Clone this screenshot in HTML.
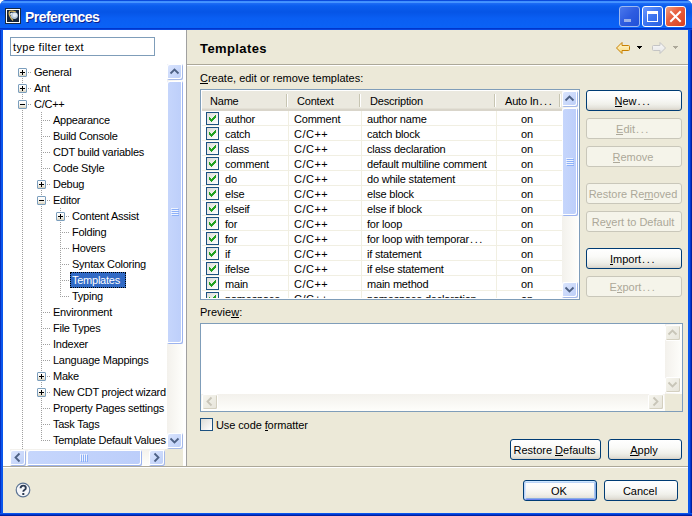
<!DOCTYPE html><html><head><meta charset="utf-8"><style>
*{box-sizing:border-box}
html,body{margin:0;padding:0;width:692px;height:516px;overflow:hidden;background:#fff}
body{position:relative;font-family:"Liberation Sans",sans-serif;font-size:11px;color:#000}
div{position:absolute}
.t{white-space:nowrap;line-height:13px;font-size:11px}
u{text-decoration:none;border-bottom:1px solid currentColor;line-height:9px;display:inline-block}
.btn{border:1px solid #003C74;border-radius:3px;background:linear-gradient(#FFFFFF 0%,#FAFAF8 40%,#F0F0EA 70%,#E3E1D9 90%,#D6D0C5 100%);text-align:center;line-height:19px;font-size:11px;padding-top:1px;padding-right:2px}
.btn.dis{border-color:#C9C7BA;background:#F5F4EA;color:#ACA899}
.sbtn{border-radius:2px;background:linear-gradient(90deg,#C8D6FB,#BACCF8);border:1px solid #fff;box-shadow:inset -1px -1px 0 #A8BDEC}
</style></head><body>
<div style="left:0;top:0;width:692px;height:516px;background:#0A47D9;border-radius:6px 6px 0 0"></div>
<div style="left:0;top:0;width:692px;height:30px;border-radius:6px 6px 0 0;background:linear-gradient(#0A4ADC 0px,#0A4ADC 1px,#3D8FFF 1px,#4A95FF 3px,#1E6DF6 3px,#0A5DEE 6px,#0655E6 12px,#0A5EF2 18px,#0A62F6 27px,#0A62F6 28px,#0036CC 28px,#0036CC 29px,#0A48E0 29px,#0A48E0 30px)"></div>
<div style="position:absolute;left:0px;top:30px;width:3px;height:486px;background:linear-gradient(90deg,#0630C4 0,#0630C4 1px,#0A56EC 1px,#0A56EC 3px)"></div>
<div style="position:absolute;left:688px;top:30px;width:4px;height:486px;background:linear-gradient(90deg,#0A56EC 0,#0A56EC 2px,#0038D0 2px,#0038D0 3px,#0020A0 3px)"></div>
<div style="position:absolute;left:0px;top:513px;width:692px;height:3px;background:linear-gradient(#0A56EC 0,#0A56EC 1px,#0038D0 1px,#0038D0 2px,#0020A0 2px)"></div>
<div style="position:absolute;left:3px;top:30px;width:685px;height:483px;background:#ECE9D8"></div>
<div style="position:absolute;left:5px;top:8px;width:16px;height:16px;background:#fff;border:1px solid #1a2a40"></div>
<svg style="position:absolute;left:7px;top:10px" width="12" height="12"><rect width="12" height="12" fill="#14243C"/><path d="M2 1.5Q5 0.5 9 2M2.5 1.5Q1 5 6 10.5" fill="none" stroke="#D8B860" stroke-width="1.3"/><ellipse cx="7.3" cy="5.6" rx="3.6" ry="3.4" fill="#B8C8D8"/><ellipse cx="7.8" cy="5" rx="2.2" ry="2" fill="#E4ECF4"/><path d="M3 4.5L5 3" stroke="#F0F4F8" stroke-width="1.2"/></svg>
<div style="left:25px;top:9px;font:bold 14px 'Liberation Sans';line-height:16px;color:#fff;text-shadow:1px 1px 0 #0A1E8C;white-space:nowrap;letter-spacing:-0.55px">Preferences</div>
<div style="position:absolute;left:619px;top:6px;width:21px;height:21px;border:1px solid #9DB8F0;border-radius:3px;background:linear-gradient(135deg,#4A78EC 0%,#2E5CE0 50%,#2050D8 100%)"></div>
<div style="position:absolute;left:642px;top:6px;width:21px;height:21px;border:1px solid #fff;border-radius:3px;background:linear-gradient(135deg,#6A98FF 0%,#3C74F0 50%,#2A60E0 100%)"></div>
<div style="position:absolute;left:665px;top:6px;width:21px;height:21px;border:1px solid #fff;border-radius:3px;background:linear-gradient(135deg,#F0A080 0%,#E86040 40%,#D84020 100%)"></div>
<div style="position:absolute;left:624px;top:19px;width:7px;height:3px;background:#9AB0E8"></div>
<div style="position:absolute;left:647px;top:11px;width:11px;height:11px;border:1px solid #fff;border-top-width:3px"></div>
<svg style="position:absolute;left:665px;top:6px" width="21" height="21"><path d="M6 6L15 15M15 6L6 15" stroke="#fff" stroke-width="2" stroke-linecap="square"/></svg>
<div style="position:absolute;left:3px;top:30px;width:183px;height:436px;background:#fff"></div>
<div style="position:absolute;left:186px;top:30px;width:1px;height:436px;background:#A0A0A0"></div>
<div style="position:absolute;left:3px;top:466px;width:685px;height:1px;background:#ACA899"></div>
<div style="position:absolute;left:3px;top:467px;width:685px;height:1px;background:#FFFFFF"></div>
<div style="position:absolute;left:10px;top:37px;width:145px;height:19px;border:1px solid #7F9DB9;background:#fff"></div>
<div class="t" style="left:13px;top:41px;letter-spacing:0.35px">type filter text</div>
<div style="left:3px;top:60px;width:164px;height:389px;overflow:hidden">
<div style="position:absolute;left:19px;top:18px;width:1px;height:371px;background:repeating-linear-gradient(#A0A0A0 0,#A0A0A0 1px,transparent 1px,transparent 2px)"></div>
<div style="position:absolute;left:38px;top:52px;width:1px;height:329px;background:repeating-linear-gradient(#A0A0A0 0,#A0A0A0 1px,transparent 1px,transparent 2px)"></div>
<div style="position:absolute;left:57px;top:148px;width:1px;height:89px;background:repeating-linear-gradient(#A0A0A0 0,#A0A0A0 1px,transparent 1px,transparent 2px)"></div>
<div style="position:absolute;left:25px;top:12px;width:4px;height:1px;background:repeating-linear-gradient(90deg,#A0A0A0 0,#A0A0A0 1px,transparent 1px,transparent 2px)"></div>
<div style="position:absolute;left:25px;top:28px;width:4px;height:1px;background:repeating-linear-gradient(90deg,#A0A0A0 0,#A0A0A0 1px,transparent 1px,transparent 2px)"></div>
<div style="position:absolute;left:25px;top:44px;width:4px;height:1px;background:repeating-linear-gradient(90deg,#A0A0A0 0,#A0A0A0 1px,transparent 1px,transparent 2px)"></div>
<div style="position:absolute;left:40px;top:60px;width:7px;height:1px;background:repeating-linear-gradient(90deg,#A0A0A0 0,#A0A0A0 1px,transparent 1px,transparent 2px)"></div>
<div style="position:absolute;left:40px;top:76px;width:7px;height:1px;background:repeating-linear-gradient(90deg,#A0A0A0 0,#A0A0A0 1px,transparent 1px,transparent 2px)"></div>
<div style="position:absolute;left:40px;top:92px;width:7px;height:1px;background:repeating-linear-gradient(90deg,#A0A0A0 0,#A0A0A0 1px,transparent 1px,transparent 2px)"></div>
<div style="position:absolute;left:40px;top:108px;width:7px;height:1px;background:repeating-linear-gradient(90deg,#A0A0A0 0,#A0A0A0 1px,transparent 1px,transparent 2px)"></div>
<div style="position:absolute;left:44px;top:124px;width:4px;height:1px;background:repeating-linear-gradient(90deg,#A0A0A0 0,#A0A0A0 1px,transparent 1px,transparent 2px)"></div>
<div style="position:absolute;left:44px;top:140px;width:4px;height:1px;background:repeating-linear-gradient(90deg,#A0A0A0 0,#A0A0A0 1px,transparent 1px,transparent 2px)"></div>
<div style="position:absolute;left:63px;top:156px;width:4px;height:1px;background:repeating-linear-gradient(90deg,#A0A0A0 0,#A0A0A0 1px,transparent 1px,transparent 2px)"></div>
<div style="position:absolute;left:59px;top:172px;width:7px;height:1px;background:repeating-linear-gradient(90deg,#A0A0A0 0,#A0A0A0 1px,transparent 1px,transparent 2px)"></div>
<div style="position:absolute;left:59px;top:188px;width:7px;height:1px;background:repeating-linear-gradient(90deg,#A0A0A0 0,#A0A0A0 1px,transparent 1px,transparent 2px)"></div>
<div style="position:absolute;left:59px;top:204px;width:7px;height:1px;background:repeating-linear-gradient(90deg,#A0A0A0 0,#A0A0A0 1px,transparent 1px,transparent 2px)"></div>
<div style="position:absolute;left:59px;top:220px;width:7px;height:1px;background:repeating-linear-gradient(90deg,#A0A0A0 0,#A0A0A0 1px,transparent 1px,transparent 2px)"></div>
<div style="position:absolute;left:59px;top:236px;width:7px;height:1px;background:repeating-linear-gradient(90deg,#A0A0A0 0,#A0A0A0 1px,transparent 1px,transparent 2px)"></div>
<div style="position:absolute;left:40px;top:252px;width:7px;height:1px;background:repeating-linear-gradient(90deg,#A0A0A0 0,#A0A0A0 1px,transparent 1px,transparent 2px)"></div>
<div style="position:absolute;left:40px;top:268px;width:7px;height:1px;background:repeating-linear-gradient(90deg,#A0A0A0 0,#A0A0A0 1px,transparent 1px,transparent 2px)"></div>
<div style="position:absolute;left:40px;top:284px;width:7px;height:1px;background:repeating-linear-gradient(90deg,#A0A0A0 0,#A0A0A0 1px,transparent 1px,transparent 2px)"></div>
<div style="position:absolute;left:40px;top:300px;width:7px;height:1px;background:repeating-linear-gradient(90deg,#A0A0A0 0,#A0A0A0 1px,transparent 1px,transparent 2px)"></div>
<div style="position:absolute;left:44px;top:316px;width:4px;height:1px;background:repeating-linear-gradient(90deg,#A0A0A0 0,#A0A0A0 1px,transparent 1px,transparent 2px)"></div>
<div style="position:absolute;left:44px;top:332px;width:4px;height:1px;background:repeating-linear-gradient(90deg,#A0A0A0 0,#A0A0A0 1px,transparent 1px,transparent 2px)"></div>
<div style="position:absolute;left:40px;top:348px;width:7px;height:1px;background:repeating-linear-gradient(90deg,#A0A0A0 0,#A0A0A0 1px,transparent 1px,transparent 2px)"></div>
<div style="position:absolute;left:40px;top:364px;width:7px;height:1px;background:repeating-linear-gradient(90deg,#A0A0A0 0,#A0A0A0 1px,transparent 1px,transparent 2px)"></div>
<div style="position:absolute;left:40px;top:380px;width:7px;height:1px;background:repeating-linear-gradient(90deg,#A0A0A0 0,#A0A0A0 1px,transparent 1px,transparent 2px)"></div>
<div style="position:absolute;left:15px;top:8px;width:9px;height:9px;border:1px solid #7B9EBD;border-radius:1px;background:linear-gradient(#fff,#F4F2EC 60%,#D8D2BE)"></div>
<div style="position:absolute;left:17px;top:12px;width:5px;height:1px;background:#000"></div>
<div style="position:absolute;left:19px;top:10px;width:1px;height:5px;background:#000"></div>
<div class="t" style="left:31px;top:6px;letter-spacing:-0.25px">General</div>
<div style="position:absolute;left:15px;top:24px;width:9px;height:9px;border:1px solid #7B9EBD;border-radius:1px;background:linear-gradient(#fff,#F4F2EC 60%,#D8D2BE)"></div>
<div style="position:absolute;left:17px;top:28px;width:5px;height:1px;background:#000"></div>
<div style="position:absolute;left:19px;top:26px;width:1px;height:5px;background:#000"></div>
<div class="t" style="left:31px;top:22px;letter-spacing:-0.25px">Ant</div>
<div style="position:absolute;left:15px;top:40px;width:9px;height:9px;border:1px solid #7B9EBD;border-radius:1px;background:linear-gradient(#fff,#F4F2EC 60%,#D8D2BE)"></div>
<div style="position:absolute;left:17px;top:44px;width:5px;height:1px;background:#000"></div>
<div class="t" style="left:31px;top:38px;letter-spacing:-0.25px">C/C++</div>
<div class="t" style="left:50px;top:54px;letter-spacing:-0.25px">Appearance</div>
<div class="t" style="left:50px;top:70px;letter-spacing:-0.25px">Build Console</div>
<div class="t" style="left:50px;top:86px;letter-spacing:-0.25px">CDT build variables</div>
<div class="t" style="left:50px;top:102px;letter-spacing:-0.25px">Code Style</div>
<div style="position:absolute;left:34px;top:120px;width:9px;height:9px;border:1px solid #7B9EBD;border-radius:1px;background:linear-gradient(#fff,#F4F2EC 60%,#D8D2BE)"></div>
<div style="position:absolute;left:36px;top:124px;width:5px;height:1px;background:#000"></div>
<div style="position:absolute;left:38px;top:122px;width:1px;height:5px;background:#000"></div>
<div class="t" style="left:50px;top:118px;letter-spacing:-0.25px">Debug</div>
<div style="position:absolute;left:34px;top:136px;width:9px;height:9px;border:1px solid #7B9EBD;border-radius:1px;background:linear-gradient(#fff,#F4F2EC 60%,#D8D2BE)"></div>
<div style="position:absolute;left:36px;top:140px;width:5px;height:1px;background:#000"></div>
<div class="t" style="left:50px;top:134px;letter-spacing:-0.25px">Editor</div>
<div style="position:absolute;left:53px;top:152px;width:9px;height:9px;border:1px solid #7B9EBD;border-radius:1px;background:linear-gradient(#fff,#F4F2EC 60%,#D8D2BE)"></div>
<div style="position:absolute;left:55px;top:156px;width:5px;height:1px;background:#000"></div>
<div style="position:absolute;left:57px;top:154px;width:1px;height:5px;background:#000"></div>
<div class="t" style="left:69px;top:150px;letter-spacing:-0.25px">Content Assist</div>
<div class="t" style="left:69px;top:166px;letter-spacing:-0.25px">Folding</div>
<div class="t" style="left:69px;top:182px;letter-spacing:-0.25px">Hovers</div>
<div class="t" style="left:69px;top:198px;letter-spacing:-0.25px">Syntax Coloring</div>
<div style="position:absolute;left:67px;top:212px;width:56px;height:16px;background:#316AC5;outline:1px dotted #000;outline-offset:-1px"></div>
<div class="t" style="left:69px;top:214px;color:#fff;letter-spacing:-0.25px">Templates</div>
<div class="t" style="left:69px;top:230px;letter-spacing:-0.25px">Typing</div>
<div class="t" style="left:50px;top:246px;letter-spacing:-0.25px">Environment</div>
<div class="t" style="left:50px;top:262px;letter-spacing:-0.25px">File Types</div>
<div class="t" style="left:50px;top:278px;letter-spacing:-0.25px">Indexer</div>
<div class="t" style="left:50px;top:294px;letter-spacing:-0.25px">Language Mappings</div>
<div style="position:absolute;left:34px;top:312px;width:9px;height:9px;border:1px solid #7B9EBD;border-radius:1px;background:linear-gradient(#fff,#F4F2EC 60%,#D8D2BE)"></div>
<div style="position:absolute;left:36px;top:316px;width:5px;height:1px;background:#000"></div>
<div style="position:absolute;left:38px;top:314px;width:1px;height:5px;background:#000"></div>
<div class="t" style="left:50px;top:310px;letter-spacing:-0.25px">Make</div>
<div style="position:absolute;left:34px;top:328px;width:9px;height:9px;border:1px solid #7B9EBD;border-radius:1px;background:linear-gradient(#fff,#F4F2EC 60%,#D8D2BE)"></div>
<div style="position:absolute;left:36px;top:332px;width:5px;height:1px;background:#000"></div>
<div style="position:absolute;left:38px;top:330px;width:1px;height:5px;background:#000"></div>
<div class="t" style="left:50px;top:326px;letter-spacing:-0.25px">New CDT project wizard</div>
<div class="t" style="left:50px;top:342px;letter-spacing:-0.25px">Property Pages settings</div>
<div class="t" style="left:50px;top:358px;letter-spacing:-0.25px">Task Tags</div>
<div class="t" style="left:50px;top:374px;letter-spacing:-0.25px">Template Default Values</div>
</div>
<div style="position:absolute;left:167px;top:64px;width:16px;height:385px;background:linear-gradient(90deg,#F3F1EC,#FEFEFB)"></div>
<div style="position:absolute;left:167px;top:64px;width:16px;height:16px;border-radius:2px;background:linear-gradient(135deg,#DCE6FE,#B9CCF7);box-shadow:inset 1px 1px 0 #fff,inset -1px -1px 0 #A4B8E8,inset -2px -2px 0 #fff"></div>
<svg style="position:absolute;left:0;top:0;overflow:visible" width="1" height="1"><path d="M170.5 73.5L174.5 69.5L178.5 73.5" fill="none" stroke="#4D6185" stroke-width="1.8"/></svg>
<div style="position:absolute;left:167px;top:81px;width:16px;height:263px;border-radius:2px;background:linear-gradient(90deg,#C6D6FC,#BCCEFA);box-shadow:inset 1px 1px 0 #fff,inset -1px -1px 0 #9CB3EE,inset -2px -2px 0 #fff"></div>
<div style="position:absolute;left:171px;top:208px;width:7px;height:1px;background:#EEF3FE;box-shadow:1px 1px 0 #8CB0F8"></div>
<div style="position:absolute;left:171px;top:210px;width:7px;height:1px;background:#EEF3FE;box-shadow:1px 1px 0 #8CB0F8"></div>
<div style="position:absolute;left:171px;top:212px;width:7px;height:1px;background:#EEF3FE;box-shadow:1px 1px 0 #8CB0F8"></div>
<div style="position:absolute;left:171px;top:214px;width:7px;height:1px;background:#EEF3FE;box-shadow:1px 1px 0 #8CB0F8"></div>
<div style="position:absolute;left:167px;top:433px;width:16px;height:16px;border-radius:2px;background:linear-gradient(135deg,#DCE6FE,#B9CCF7);box-shadow:inset 1px 1px 0 #fff,inset -1px -1px 0 #A4B8E8,inset -2px -2px 0 #fff"></div>
<svg style="position:absolute;left:0;top:0;overflow:visible" width="1" height="1"><path d="M170.5 438.5L174.5 442.5L178.5 438.5" fill="none" stroke="#4D6185" stroke-width="1.8"/></svg>
<div style="position:absolute;left:10px;top:449px;width:157px;height:16px;background:linear-gradient(#F3F1EC,#FEFEFB)"></div>
<div style="position:absolute;left:10px;top:450px;width:16px;height:16px;border-radius:2px;background:linear-gradient(135deg,#DCE6FE,#B9CCF7);box-shadow:inset 1px 1px 0 #fff,inset -1px -1px 0 #A4B8E8,inset -2px -2px 0 #fff"></div>
<svg style="position:absolute;left:0;top:0;overflow:visible" width="1" height="1"><path d="M19.5 453.5L15.5 457.5L19.5 461.5" fill="none" stroke="#4D6185" stroke-width="1.8"/></svg>
<div style="position:absolute;left:27px;top:450px;width:115px;height:16px;border-radius:2px;background:linear-gradient(90deg,#C6D6FC,#BCCEFA);box-shadow:inset 1px 1px 0 #fff,inset -1px -1px 0 #9CB3EE,inset -2px -2px 0 #fff"></div>
<div style="position:absolute;left:80px;top:454px;width:1px;height:7px;background:#EEF3FE;box-shadow:1px 1px 0 #8CB0F8"></div>
<div style="position:absolute;left:82px;top:454px;width:1px;height:7px;background:#EEF3FE;box-shadow:1px 1px 0 #8CB0F8"></div>
<div style="position:absolute;left:84px;top:454px;width:1px;height:7px;background:#EEF3FE;box-shadow:1px 1px 0 #8CB0F8"></div>
<div style="position:absolute;left:86px;top:454px;width:1px;height:7px;background:#EEF3FE;box-shadow:1px 1px 0 #8CB0F8"></div>
<div style="position:absolute;left:149px;top:450px;width:16px;height:16px;border-radius:2px;background:linear-gradient(135deg,#DCE6FE,#B9CCF7);box-shadow:inset 1px 1px 0 #fff,inset -1px -1px 0 #A4B8E8,inset -2px -2px 0 #fff"></div>
<svg style="position:absolute;left:0;top:0;overflow:visible" width="1" height="1"><path d="M154.5 453.5L158.5 457.5L154.5 461.5" fill="none" stroke="#4D6185" stroke-width="1.8"/></svg>
<div style="position:absolute;left:165px;top:449px;width:18px;height:17px;background:#ECE9D8"></div>
<div style="left:200px;top:41px;font:bold 13px 'Liberation Sans';line-height:16px;white-space:nowrap;letter-spacing:0.4px">Templates</div>
<svg style="position:absolute;left:614px;top:40px" width="18" height="16"><defs><linearGradient id="ga" x1="0" y1="0" x2="0" y2="1"><stop offset="0" stop-color="#FFF8D8"/><stop offset="1" stop-color="#F8D878"/></linearGradient></defs><path d="M2.5 8L8 2.5V5.5H14.5Q15.5 5.5 15.5 6.5V9.5Q15.5 10.5 14.5 10.5H8V13.5Z" fill="url(#ga)" stroke="#C88000" stroke-width="1"/></svg>
<div style="position:absolute;left:637px;top:46px;width:5px;height:1px;background:#000"></div>
<div style="position:absolute;left:638px;top:47px;width:3px;height:1px;background:#000"></div>
<div style="position:absolute;left:639px;top:48px;width:1px;height:1px;background:#000"></div>
<svg style="position:absolute;left:650px;top:40px" width="18" height="16"><defs><linearGradient id="gb" x1="0" y1="0" x2="0" y2="1"><stop offset="0" stop-color="#FAFAFA"/><stop offset="1" stop-color="#E4E4E4"/></linearGradient></defs><path d="M15.5 8L10 2.5V5.5H3.5Q2.5 5.5 2.5 6.5V9.5Q2.5 10.5 3.5 10.5H10V13.5Z" fill="url(#gb)" stroke="#C4C4C4" stroke-width="1"/></svg>
<div style="position:absolute;left:673px;top:46px;width:5px;height:1px;background:#ACA899"></div>
<div style="position:absolute;left:674px;top:47px;width:3px;height:1px;background:#ACA899"></div>
<div style="position:absolute;left:675px;top:48px;width:1px;height:1px;background:#ACA899"></div>
<div style="position:absolute;left:187px;top:64px;width:501px;height:1px;background:#ACA899"></div>
<div style="position:absolute;left:187px;top:65px;width:501px;height:1px;background:#fff"></div>
<div class="t" style="left:200px;top:72px;"><u>C</u>reate, edit or remove templates:</div>
<div style="position:absolute;left:200px;top:89px;width:380px;height:211px;border:1px solid #7F9DB9;background:#fff"></div>
<div style="left:202px;top:91px;width:360px;height:207px;overflow:hidden">
<div style="position:absolute;left:0px;top:0px;width:360px;height:20px;background:linear-gradient(#EBE9DF 0,#EBE9DF 17px,#E3E0D5 17px,#E3E0D5 18px,#D9D5CA 18px)"></div>
<div style="position:absolute;left:84px;top:3px;width:1px;height:13px;background:#C7C5B2;box-shadow:1px 0 0 #fff"></div>
<div style="position:absolute;left:157px;top:3px;width:1px;height:13px;background:#C7C5B2;box-shadow:1px 0 0 #fff"></div>
<div style="position:absolute;left:292px;top:3px;width:1px;height:13px;background:#C7C5B2;box-shadow:1px 0 0 #fff"></div>
<div style="position:absolute;left:357px;top:3px;width:1px;height:13px;background:#C7C5B2;box-shadow:1px 0 0 #fff"></div>
<div class="t" style="left:8px;top:4px;letter-spacing:-0.2px;">Name</div>
<div class="t" style="left:95px;top:4px;letter-spacing:-0.2px;">Context</div>
<div class="t" style="left:168px;top:4px;letter-spacing:-0.2px;">Description</div>
<div class="t" style="left:303px;top:4px;letter-spacing:-0.2px;">Auto In<span style="letter-spacing:1.6px;padding-left:1px">...</span></div>
<div style="position:absolute;left:0px;top:34px;width:360px;height:1px;background:#F1EFE2"></div>
<div style="position:absolute;left:4px;top:21px;width:13px;height:13px;border:1px solid #1C5180;background:linear-gradient(135deg,#DCDCD7,#FFFFFF)"></div>
<svg style="position:absolute;left:4px;top:21px" width="13" height="13" shape-rendering="crispEdges"><path d="M9 3h1v1h-1zM8 4h2v1h-2zM3 5h1v1h-1zM7 5h3v1h-3zM3 6h2v1h-2zM6 6h3v1h-3zM3 7h5v1h-5zM4 8h3v1h-3zM5 9h1v1h-1z" fill="#21A121"/></svg>
<div class="t" style="left:23px;top:22px;letter-spacing:-0.2px;">author</div>
<div class="t" style="left:92px;top:22px;letter-spacing:-0.2px;">Comment</div>
<div class="t" style="left:165px;top:22px;letter-spacing:-0.2px;">author name</div>
<div class="t" style="left:319px;top:22px;letter-spacing:-0.2px;">on</div>
<div style="position:absolute;left:0px;top:49px;width:360px;height:1px;background:#F1EFE2"></div>
<div style="position:absolute;left:4px;top:36px;width:13px;height:13px;border:1px solid #1C5180;background:linear-gradient(135deg,#DCDCD7,#FFFFFF)"></div>
<svg style="position:absolute;left:4px;top:36px" width="13" height="13" shape-rendering="crispEdges"><path d="M9 3h1v1h-1zM8 4h2v1h-2zM3 5h1v1h-1zM7 5h3v1h-3zM3 6h2v1h-2zM6 6h3v1h-3zM3 7h5v1h-5zM4 8h3v1h-3zM5 9h1v1h-1z" fill="#21A121"/></svg>
<div class="t" style="left:23px;top:37px;letter-spacing:-0.2px;">catch</div>
<div class="t" style="left:92px;top:37px;letter-spacing:-0.2px;letter-spacing:0.5px">C/C++</div>
<div class="t" style="left:165px;top:37px;letter-spacing:-0.2px;">catch block</div>
<div class="t" style="left:319px;top:37px;letter-spacing:-0.2px;">on</div>
<div style="position:absolute;left:0px;top:64px;width:360px;height:1px;background:#F1EFE2"></div>
<div style="position:absolute;left:4px;top:51px;width:13px;height:13px;border:1px solid #1C5180;background:linear-gradient(135deg,#DCDCD7,#FFFFFF)"></div>
<svg style="position:absolute;left:4px;top:51px" width="13" height="13" shape-rendering="crispEdges"><path d="M9 3h1v1h-1zM8 4h2v1h-2zM3 5h1v1h-1zM7 5h3v1h-3zM3 6h2v1h-2zM6 6h3v1h-3zM3 7h5v1h-5zM4 8h3v1h-3zM5 9h1v1h-1z" fill="#21A121"/></svg>
<div class="t" style="left:23px;top:52px;letter-spacing:-0.2px;">class</div>
<div class="t" style="left:92px;top:52px;letter-spacing:-0.2px;letter-spacing:0.5px">C/C++</div>
<div class="t" style="left:165px;top:52px;letter-spacing:-0.2px;">class declaration</div>
<div class="t" style="left:319px;top:52px;letter-spacing:-0.2px;">on</div>
<div style="position:absolute;left:0px;top:79px;width:360px;height:1px;background:#F1EFE2"></div>
<div style="position:absolute;left:4px;top:66px;width:13px;height:13px;border:1px solid #1C5180;background:linear-gradient(135deg,#DCDCD7,#FFFFFF)"></div>
<svg style="position:absolute;left:4px;top:66px" width="13" height="13" shape-rendering="crispEdges"><path d="M9 3h1v1h-1zM8 4h2v1h-2zM3 5h1v1h-1zM7 5h3v1h-3zM3 6h2v1h-2zM6 6h3v1h-3zM3 7h5v1h-5zM4 8h3v1h-3zM5 9h1v1h-1z" fill="#21A121"/></svg>
<div class="t" style="left:23px;top:67px;letter-spacing:-0.2px;">comment</div>
<div class="t" style="left:92px;top:67px;letter-spacing:-0.2px;letter-spacing:0.5px">C/C++</div>
<div class="t" style="left:165px;top:67px;letter-spacing:-0.2px;">default multiline comment</div>
<div class="t" style="left:319px;top:67px;letter-spacing:-0.2px;">on</div>
<div style="position:absolute;left:0px;top:94px;width:360px;height:1px;background:#F1EFE2"></div>
<div style="position:absolute;left:4px;top:81px;width:13px;height:13px;border:1px solid #1C5180;background:linear-gradient(135deg,#DCDCD7,#FFFFFF)"></div>
<svg style="position:absolute;left:4px;top:81px" width="13" height="13" shape-rendering="crispEdges"><path d="M9 3h1v1h-1zM8 4h2v1h-2zM3 5h1v1h-1zM7 5h3v1h-3zM3 6h2v1h-2zM6 6h3v1h-3zM3 7h5v1h-5zM4 8h3v1h-3zM5 9h1v1h-1z" fill="#21A121"/></svg>
<div class="t" style="left:23px;top:82px;letter-spacing:-0.2px;">do</div>
<div class="t" style="left:92px;top:82px;letter-spacing:-0.2px;letter-spacing:0.5px">C/C++</div>
<div class="t" style="left:165px;top:82px;letter-spacing:-0.2px;">do while statement</div>
<div class="t" style="left:319px;top:82px;letter-spacing:-0.2px;">on</div>
<div style="position:absolute;left:0px;top:109px;width:360px;height:1px;background:#F1EFE2"></div>
<div style="position:absolute;left:4px;top:96px;width:13px;height:13px;border:1px solid #1C5180;background:linear-gradient(135deg,#DCDCD7,#FFFFFF)"></div>
<svg style="position:absolute;left:4px;top:96px" width="13" height="13" shape-rendering="crispEdges"><path d="M9 3h1v1h-1zM8 4h2v1h-2zM3 5h1v1h-1zM7 5h3v1h-3zM3 6h2v1h-2zM6 6h3v1h-3zM3 7h5v1h-5zM4 8h3v1h-3zM5 9h1v1h-1z" fill="#21A121"/></svg>
<div class="t" style="left:23px;top:97px;letter-spacing:-0.2px;">else</div>
<div class="t" style="left:92px;top:97px;letter-spacing:-0.2px;letter-spacing:0.5px">C/C++</div>
<div class="t" style="left:165px;top:97px;letter-spacing:-0.2px;">else block</div>
<div class="t" style="left:319px;top:97px;letter-spacing:-0.2px;">on</div>
<div style="position:absolute;left:0px;top:124px;width:360px;height:1px;background:#F1EFE2"></div>
<div style="position:absolute;left:4px;top:111px;width:13px;height:13px;border:1px solid #1C5180;background:linear-gradient(135deg,#DCDCD7,#FFFFFF)"></div>
<svg style="position:absolute;left:4px;top:111px" width="13" height="13" shape-rendering="crispEdges"><path d="M9 3h1v1h-1zM8 4h2v1h-2zM3 5h1v1h-1zM7 5h3v1h-3zM3 6h2v1h-2zM6 6h3v1h-3zM3 7h5v1h-5zM4 8h3v1h-3zM5 9h1v1h-1z" fill="#21A121"/></svg>
<div class="t" style="left:23px;top:112px;letter-spacing:-0.2px;">elseif</div>
<div class="t" style="left:92px;top:112px;letter-spacing:-0.2px;letter-spacing:0.5px">C/C++</div>
<div class="t" style="left:165px;top:112px;letter-spacing:-0.2px;">else if block</div>
<div class="t" style="left:319px;top:112px;letter-spacing:-0.2px;">on</div>
<div style="position:absolute;left:0px;top:139px;width:360px;height:1px;background:#F1EFE2"></div>
<div style="position:absolute;left:4px;top:126px;width:13px;height:13px;border:1px solid #1C5180;background:linear-gradient(135deg,#DCDCD7,#FFFFFF)"></div>
<svg style="position:absolute;left:4px;top:126px" width="13" height="13" shape-rendering="crispEdges"><path d="M9 3h1v1h-1zM8 4h2v1h-2zM3 5h1v1h-1zM7 5h3v1h-3zM3 6h2v1h-2zM6 6h3v1h-3zM3 7h5v1h-5zM4 8h3v1h-3zM5 9h1v1h-1z" fill="#21A121"/></svg>
<div class="t" style="left:23px;top:127px;letter-spacing:-0.2px;">for</div>
<div class="t" style="left:92px;top:127px;letter-spacing:-0.2px;letter-spacing:0.5px">C/C++</div>
<div class="t" style="left:165px;top:127px;letter-spacing:-0.2px;">for loop</div>
<div class="t" style="left:319px;top:127px;letter-spacing:-0.2px;">on</div>
<div style="position:absolute;left:0px;top:154px;width:360px;height:1px;background:#F1EFE2"></div>
<div style="position:absolute;left:4px;top:141px;width:13px;height:13px;border:1px solid #1C5180;background:linear-gradient(135deg,#DCDCD7,#FFFFFF)"></div>
<svg style="position:absolute;left:4px;top:141px" width="13" height="13" shape-rendering="crispEdges"><path d="M9 3h1v1h-1zM8 4h2v1h-2zM3 5h1v1h-1zM7 5h3v1h-3zM3 6h2v1h-2zM6 6h3v1h-3zM3 7h5v1h-5zM4 8h3v1h-3zM5 9h1v1h-1z" fill="#21A121"/></svg>
<div class="t" style="left:23px;top:142px;letter-spacing:-0.2px;">for</div>
<div class="t" style="left:92px;top:142px;letter-spacing:-0.2px;letter-spacing:0.5px">C/C++</div>
<div class="t" style="left:165px;top:142px;letter-spacing:-0.2px;">for loop with temporar<span style="letter-spacing:1.6px;padding-left:1px">...</span></div>
<div class="t" style="left:319px;top:142px;letter-spacing:-0.2px;">on</div>
<div style="position:absolute;left:0px;top:169px;width:360px;height:1px;background:#F1EFE2"></div>
<div style="position:absolute;left:4px;top:156px;width:13px;height:13px;border:1px solid #1C5180;background:linear-gradient(135deg,#DCDCD7,#FFFFFF)"></div>
<svg style="position:absolute;left:4px;top:156px" width="13" height="13" shape-rendering="crispEdges"><path d="M9 3h1v1h-1zM8 4h2v1h-2zM3 5h1v1h-1zM7 5h3v1h-3zM3 6h2v1h-2zM6 6h3v1h-3zM3 7h5v1h-5zM4 8h3v1h-3zM5 9h1v1h-1z" fill="#21A121"/></svg>
<div class="t" style="left:23px;top:157px;letter-spacing:-0.2px;">if</div>
<div class="t" style="left:92px;top:157px;letter-spacing:-0.2px;letter-spacing:0.5px">C/C++</div>
<div class="t" style="left:165px;top:157px;letter-spacing:-0.2px;">if statement</div>
<div class="t" style="left:319px;top:157px;letter-spacing:-0.2px;">on</div>
<div style="position:absolute;left:0px;top:184px;width:360px;height:1px;background:#F1EFE2"></div>
<div style="position:absolute;left:4px;top:171px;width:13px;height:13px;border:1px solid #1C5180;background:linear-gradient(135deg,#DCDCD7,#FFFFFF)"></div>
<svg style="position:absolute;left:4px;top:171px" width="13" height="13" shape-rendering="crispEdges"><path d="M9 3h1v1h-1zM8 4h2v1h-2zM3 5h1v1h-1zM7 5h3v1h-3zM3 6h2v1h-2zM6 6h3v1h-3zM3 7h5v1h-5zM4 8h3v1h-3zM5 9h1v1h-1z" fill="#21A121"/></svg>
<div class="t" style="left:23px;top:172px;letter-spacing:-0.2px;">ifelse</div>
<div class="t" style="left:92px;top:172px;letter-spacing:-0.2px;letter-spacing:0.5px">C/C++</div>
<div class="t" style="left:165px;top:172px;letter-spacing:-0.2px;">if else statement</div>
<div class="t" style="left:319px;top:172px;letter-spacing:-0.2px;">on</div>
<div style="position:absolute;left:0px;top:199px;width:360px;height:1px;background:#F1EFE2"></div>
<div style="position:absolute;left:4px;top:186px;width:13px;height:13px;border:1px solid #1C5180;background:linear-gradient(135deg,#DCDCD7,#FFFFFF)"></div>
<svg style="position:absolute;left:4px;top:186px" width="13" height="13" shape-rendering="crispEdges"><path d="M9 3h1v1h-1zM8 4h2v1h-2zM3 5h1v1h-1zM7 5h3v1h-3zM3 6h2v1h-2zM6 6h3v1h-3zM3 7h5v1h-5zM4 8h3v1h-3zM5 9h1v1h-1z" fill="#21A121"/></svg>
<div class="t" style="left:23px;top:187px;letter-spacing:-0.2px;">main</div>
<div class="t" style="left:92px;top:187px;letter-spacing:-0.2px;letter-spacing:0.5px">C/C++</div>
<div class="t" style="left:165px;top:187px;letter-spacing:-0.2px;">main method</div>
<div class="t" style="left:319px;top:187px;letter-spacing:-0.2px;">on</div>
<div style="position:absolute;left:0px;top:214px;width:360px;height:1px;background:#F1EFE2"></div>
<div style="position:absolute;left:4px;top:201px;width:13px;height:13px;border:1px solid #1C5180;background:linear-gradient(135deg,#DCDCD7,#FFFFFF)"></div>
<svg style="position:absolute;left:4px;top:201px" width="13" height="13" shape-rendering="crispEdges"><path d="M9 3h1v1h-1zM8 4h2v1h-2zM3 5h1v1h-1zM7 5h3v1h-3zM3 6h2v1h-2zM6 6h3v1h-3zM3 7h5v1h-5zM4 8h3v1h-3zM5 9h1v1h-1z" fill="#21A121"/></svg>
<div class="t" style="left:23px;top:202px;letter-spacing:-0.2px;">namespace</div>
<div class="t" style="left:92px;top:202px;letter-spacing:-0.2px;letter-spacing:0.5px">C/C++</div>
<div class="t" style="left:165px;top:202px;letter-spacing:-0.2px;">namespace declaration</div>
<div class="t" style="left:319px;top:202px;letter-spacing:-0.2px;">on</div>
<div style="position:absolute;left:86px;top:20px;width:1px;height:190px;background:#F1EFE2"></div>
<div style="position:absolute;left:159px;top:20px;width:1px;height:190px;background:#F1EFE2"></div>
<div style="position:absolute;left:294px;top:20px;width:1px;height:190px;background:#F1EFE2"></div>
</div>
<div style="position:absolute;left:562px;top:91px;width:16px;height:207px;background:linear-gradient(90deg,#F3F1EC,#FEFEFB)"></div>
<div style="position:absolute;left:562px;top:91px;width:16px;height:16px;border-radius:2px;background:linear-gradient(135deg,#DCE6FE,#B9CCF7);box-shadow:inset 1px 1px 0 #fff,inset -1px -1px 0 #A4B8E8,inset -2px -2px 0 #fff"></div>
<svg style="position:absolute;left:0;top:0;overflow:visible" width="1" height="1"><path d="M565.5 100.5L569.5 96.5L573.5 100.5" fill="none" stroke="#4D6185" stroke-width="1.8"/></svg>
<div style="position:absolute;left:562px;top:108px;width:16px;height:108px;border-radius:2px;background:linear-gradient(90deg,#C6D6FC,#BCCEFA);box-shadow:inset 1px 1px 0 #fff,inset -1px -1px 0 #9CB3EE,inset -2px -2px 0 #fff"></div>
<div style="position:absolute;left:566px;top:158px;width:7px;height:1px;background:#EEF3FE;box-shadow:1px 1px 0 #8CB0F8"></div>
<div style="position:absolute;left:566px;top:160px;width:7px;height:1px;background:#EEF3FE;box-shadow:1px 1px 0 #8CB0F8"></div>
<div style="position:absolute;left:566px;top:162px;width:7px;height:1px;background:#EEF3FE;box-shadow:1px 1px 0 #8CB0F8"></div>
<div style="position:absolute;left:566px;top:164px;width:7px;height:1px;background:#EEF3FE;box-shadow:1px 1px 0 #8CB0F8"></div>
<div style="position:absolute;left:562px;top:282px;width:16px;height:16px;border-radius:2px;background:linear-gradient(135deg,#DCE6FE,#B9CCF7);box-shadow:inset 1px 1px 0 #fff,inset -1px -1px 0 #A4B8E8,inset -2px -2px 0 #fff"></div>
<svg style="position:absolute;left:0;top:0;overflow:visible" width="1" height="1"><path d="M565.5 287.5L569.5 291.5L573.5 287.5" fill="none" stroke="#4D6185" stroke-width="1.8"/></svg>
<div class="btn" style="left:586px;top:90px;width:96px;height:21px;"><u>N</u>ew<span style="letter-spacing:1.6px;padding-left:1px">...</span></div>
<div class="btn dis" style="left:586px;top:118px;width:96px;height:21px;"><u>E</u>dit<span style="letter-spacing:1.6px;padding-left:1px">...</span></div>
<div class="btn dis" style="left:586px;top:146px;width:96px;height:21px;"><u>R</u>emove</div>
<div class="btn dis" style="left:586px;top:183px;width:96px;height:21px;">Restore Re<u>m</u>oved</div>
<div class="btn dis" style="left:586px;top:211px;width:96px;height:21px;">Re<u>v</u>ert to Default</div>
<div class="btn" style="left:586px;top:248px;width:96px;height:21px;"><u>I</u>mport<span style="letter-spacing:1.6px;padding-left:1px">...</span></div>
<div class="btn dis" style="left:586px;top:276px;width:96px;height:21px;">E<u>x</u>port<span style="letter-spacing:1.6px;padding-left:1px">...</span></div>
<div class="t" style="left:200px;top:306px;">Previe<u>w</u>:</div>
<div style="position:absolute;left:200px;top:323px;width:483px;height:89px;border:1px solid #7F9DB9;background:#fff"></div>
<div style="position:absolute;left:665px;top:324px;width:17px;height:71px;background:linear-gradient(90deg,#F3F1EC,#FEFEFB)"></div>
<div style="position:absolute;left:665px;top:325px;width:16px;height:16px;border-radius:2px;background:linear-gradient(135deg,#F6F5EE,#E6E4DA);border:1px solid #fff;box-shadow:inset -1px -1px 0 #D4D0C0"></div>
<svg style="position:absolute;left:0;top:0;overflow:visible" width="1" height="1"><path d="M668.5 334.5L672.5 330.5L676.5 334.5" fill="none" stroke="#C8C5B8" stroke-width="1.8"/></svg>
<div style="position:absolute;left:665px;top:377px;width:16px;height:16px;border-radius:2px;background:linear-gradient(135deg,#F6F5EE,#E6E4DA);border:1px solid #fff;box-shadow:inset -1px -1px 0 #D4D0C0"></div>
<svg style="position:absolute;left:0;top:0;overflow:visible" width="1" height="1"><path d="M668.5 382.5L672.5 386.5L676.5 382.5" fill="none" stroke="#C8C5B8" stroke-width="1.8"/></svg>
<div style="position:absolute;left:201px;top:394px;width:464px;height:17px;background:linear-gradient(#F3F1EC,#FEFEFB)"></div>
<div style="position:absolute;left:202px;top:394px;width:16px;height:16px;border-radius:2px;background:linear-gradient(135deg,#F6F5EE,#E6E4DA);border:1px solid #fff;box-shadow:inset -1px -1px 0 #D4D0C0"></div>
<svg style="position:absolute;left:0;top:0;overflow:visible" width="1" height="1"><path d="M211.5 397.5L207.5 401.5L211.5 405.5" fill="none" stroke="#C8C5B8" stroke-width="1.8"/></svg>
<div style="position:absolute;left:648px;top:394px;width:16px;height:16px;border-radius:2px;background:linear-gradient(135deg,#F6F5EE,#E6E4DA);border:1px solid #fff;box-shadow:inset -1px -1px 0 #D4D0C0"></div>
<svg style="position:absolute;left:0;top:0;overflow:visible" width="1" height="1"><path d="M653.5 397.5L657.5 401.5L653.5 405.5" fill="none" stroke="#C8C5B8" stroke-width="1.8"/></svg>
<div style="position:absolute;left:665px;top:394px;width:17px;height:17px;background:#ECE9D8"></div>
<div style="position:absolute;left:200px;top:418px;width:13px;height:13px;border:1px solid #1C5180;background:linear-gradient(135deg,#DCDCD7,#FFFFFF)"></div>
<div class="t" style="left:216px;top:419px;letter-spacing:-0.1px">Use code <u>f</u>ormatter</div>
<div class="btn" style="left:510px;top:439px;width:91px;height:21px;">Restore <u>D</u>efaults</div>
<div class="btn" style="left:608px;top:439px;width:74px;height:21px;"><u>A</u>pply</div>
<svg style="position:absolute;left:15px;top:482px" width="16" height="16"><circle cx="8" cy="8" r="6.8" fill="#F6F7FA" stroke="#5C7494" stroke-width="1.2"/><path d="M5.6 6.2Q5.6 3.6 8.2 3.6Q10.8 3.6 10.8 5.9Q10.8 7.2 9.4 8Q8.3 8.6 8.3 9.8" fill="none" stroke="#2B3A52" stroke-width="1.9"/><rect x="7.3" y="11" width="2" height="2" fill="#2B3A52"/></svg>
<div class="btn" style="left:523px;top:480px;width:74px;height:21px;box-shadow:inset 0 1px 0 #CEE7FF,inset 1px 0 0 #BCD4F6,inset -1px 0 0 #89ADE4,inset 0 -1px 0 #6982EE,inset 0 2px 0 #BCD4F6,inset 2px 0 0 #D6E6FC,inset -2px 0 0 #A8C4F0,inset 0 -2px 0 #89ADE4;">OK</div>
<div class="btn" style="left:604px;top:480px;width:74px;height:21px;">Cancel</div>
</body></html>
